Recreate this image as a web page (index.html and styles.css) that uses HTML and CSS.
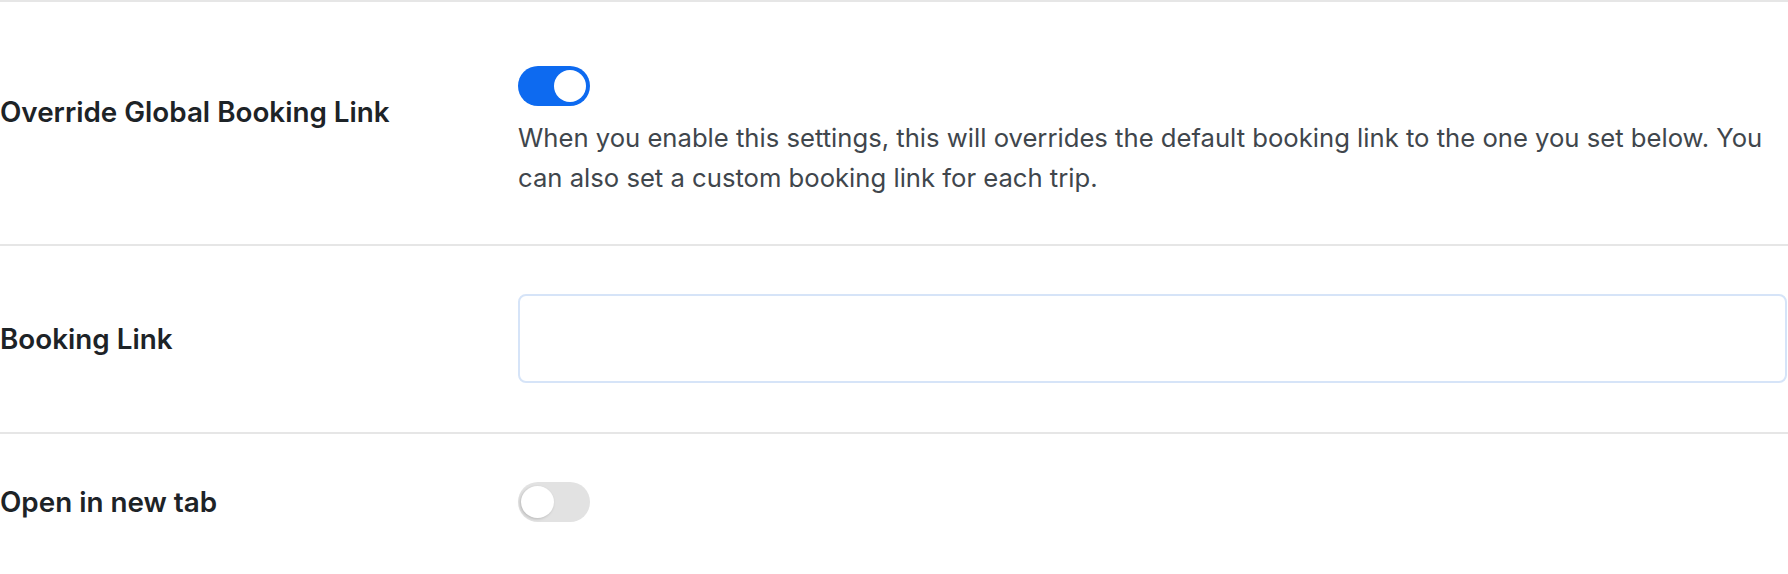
FILE: index.html
```html
<!DOCTYPE html>
<html lang="en">
<head>
<meta charset="utf-8">
<title>Booking Settings</title>
<link rel="stylesheet" href="styles.css">
</head>
<body>
<div class="settings">
  <div class="row row-first">
    <div class="label label-top">Override Global Booking Link</div>
    <div class="control">
      <span class="switch switch-on"><span class="knob"></span></span>
      <p class="desc">When you enable this settings, this will overrides the default booking link to the one you set below. You can also set a custom booking link for each trip.</p>
    </div>
  </div>
  <div class="row row-mid">
    <div class="label">Booking Link</div>
    <div class="control">
      <input class="text-input" type="text" aria-label="Booking Link">
    </div>
  </div>
  <div class="row row-last">
    <div class="label">Open in new tab</div>
    <div class="control">
      <span class="switch switch-off"><span class="knob"></span></span>
    </div>
  </div>
</div>
</body>
</html>
```
FILE: styles.css
```css
html, body {
  margin: 0;
  padding: 0;
  background: #ffffff;
}
body {
  font-family: Inter, "Noto Sans", "Liberation Sans", sans-serif;
  color: #1d2327;
}
.settings {
  width: 1788px;
}
.row {
  display: flex;
  border-top: 2px solid #e6e6e6;
}
.row-first {
  padding: 64px 0 46px;
  align-items: flex-start;
}
.row-mid {
  padding: 48px 0 49px;
  align-items: center;
}
.row-last {
  padding: 48px 0 52px;
  align-items: center;
}
.label {
  width: 518px;
  flex: none;
  font-size: 27.8px;
  line-height: 34px;
  font-weight: 600;
  color: #1d2327;
}
.label-top {
  margin-top: 29px;
}
.control {
  flex: 1;
  min-width: 0;
  padding-right: 1px;
}
.switch {
  display: flex;
  width: 72px;
  height: 40px;
  border-radius: 20px;
  box-sizing: border-box;
  padding: 4px;
}
.switch-on {
  background: #0d6af0;
  justify-content: flex-end;
}
.switch-off {
  background: #e2e2e2;
  justify-content: flex-start;
  padding: 4px 3px;
}
.knob {
  width: 32px;
  height: 32px;
  border-radius: 50%;
  background: #ffffff;
}
.switch-off .knob {
  width: 33px;
  box-shadow: -1px 1px 3px rgba(0, 0, 0, 0.18);
}
.desc {
  margin: 12px 0 0;
  font-size: 25.65px;
  line-height: 40px;
  color: #40464c;
}
.text-input {
  display: block;
  width: 100%;
  height: 89px;
  box-sizing: border-box;
  border: 2px solid #d6e4f8;
  border-radius: 8px;
  background: #ffffff;
  outline: none;
  font: inherit;
  padding: 0 16px;
}
```
